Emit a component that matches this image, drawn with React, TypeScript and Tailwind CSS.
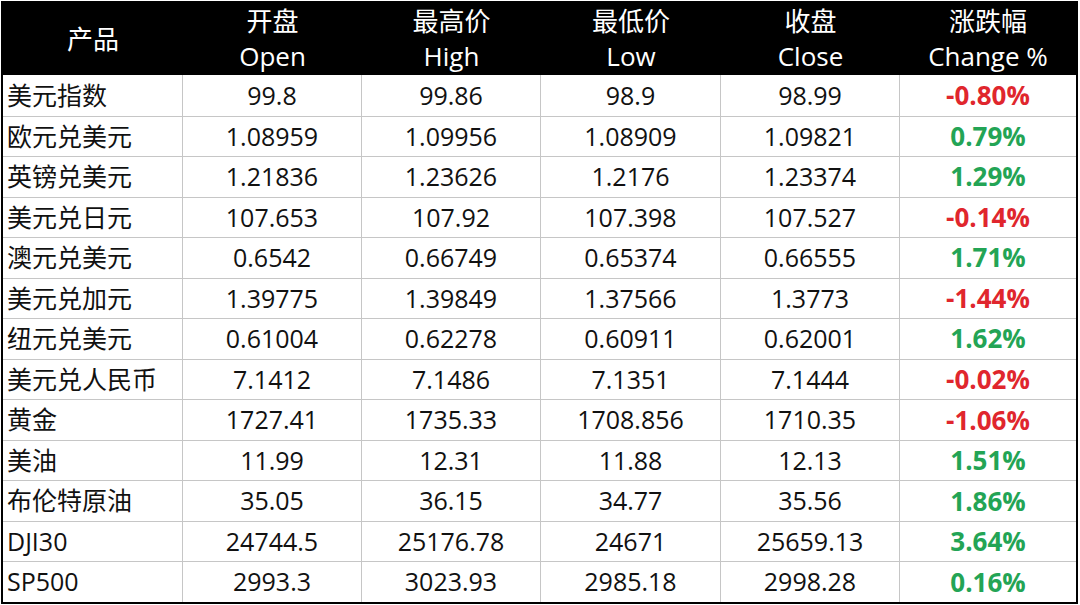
import React from 'react';

type Row = {
  name: string;
  open: string;
  high: string;
  low: string;
  close: string;
  change: string;
};

const rows: Row[] = [
  { name: '美元指数', open: '99.8', high: '99.86', low: '98.9', close: '98.99', change: '-0.80%' },
  { name: '欧元兑美元', open: '1.08959', high: '1.09956', low: '1.08909', close: '1.09821', change: '0.79%' },
  { name: '英镑兑美元', open: '1.21836', high: '1.23626', low: '1.2176', close: '1.23374', change: '1.29%' },
  { name: '美元兑日元', open: '107.653', high: '107.92', low: '107.398', close: '107.527', change: '-0.14%' },
  { name: '澳元兑美元', open: '0.6542', high: '0.66749', low: '0.65374', close: '0.66555', change: '1.71%' },
  { name: '美元兑加元', open: '1.39775', high: '1.39849', low: '1.37566', close: '1.3773', change: '-1.44%' },
  { name: '纽元兑美元', open: '0.61004', high: '0.62278', low: '0.60911', close: '0.62001', change: '1.62%' },
  { name: '美元兑人民币', open: '7.1412', high: '7.1486', low: '7.1351', close: '7.1444', change: '-0.02%' },
  { name: '黄金', open: '1727.41', high: '1735.33', low: '1708.856', close: '1710.35', change: '-1.06%' },
  { name: '美油', open: '11.99', high: '12.31', low: '11.88', close: '12.13', change: '1.51%' },
  { name: '布伦特原油', open: '35.05', high: '36.15', low: '34.77', close: '35.56', change: '1.86%' },
  { name: 'DJI30', open: '24744.5', high: '25176.78', low: '24671', close: '25659.13', change: '3.64%' },
  { name: 'SP500', open: '2993.3', high: '3023.93', low: '2985.18', close: '2998.28', change: '0.16%' },
];

const headers = [
  ['开盘', 'Open'],
  ['最高价', 'High'],
  ['最低价', 'Low'],
  ['收盘', 'Close'],
  ['涨跌幅', 'Change %'],
];

const cols = 'grid grid-cols-[180px_179px_179px_180px_179px_1fr]';

export default function App() {
  return (
    <div className="w-[1080px] h-[605px] bg-white pl-px pt-px pr-[2px] pb-px font-['Open_Sans','Noto_Sans_CJK_SC',sans-serif] text-[25px] text-[#111]">
      <div className="h-full border-2 border-black flex flex-col">
        {/* header */}
        <div className={`${cols} h-[72px] bg-black text-white text-[26px]`}>
          <div className="flex items-center justify-center">产品</div>
          {headers.map(([zh, en]) => (
            <div key={en} className="flex flex-col items-center justify-center leading-[35px]">
              <span>{zh}</span>
              <span>{en}</span>
            </div>
          ))}
        </div>

        {/* body */}
        <div className="flex-1 grid grid-rows-13">
          {rows.map((r, i) => {
            const down = r.change.startsWith('-');
            return (
              <div
                key={r.name}
                className={`${cols} ${i === 0 ? '' : 'border-t border-[#c6c6c6]'}`}
              >
                <div className="flex items-center pl-[4px] border-r border-[#c6c6c6]">{r.name}</div>
                <div className="flex items-center justify-center border-r border-[#c6c6c6]">{r.open}</div>
                <div className="flex items-center justify-center border-r border-[#c6c6c6]">{r.high}</div>
                <div className="flex items-center justify-center border-r border-[#c6c6c6]">{r.low}</div>
                <div className="flex items-center justify-center border-r border-[#c6c6c6]">{r.close}</div>
                <div
                  className={`flex items-center justify-center font-bold text-[26px] ${down ? 'text-[#e0262d]' : 'text-[#23a455]'}`}
                >
                  {r.change}
                </div>
              </div>
            );
          })}
        </div>
      </div>
    </div>
  );
}
